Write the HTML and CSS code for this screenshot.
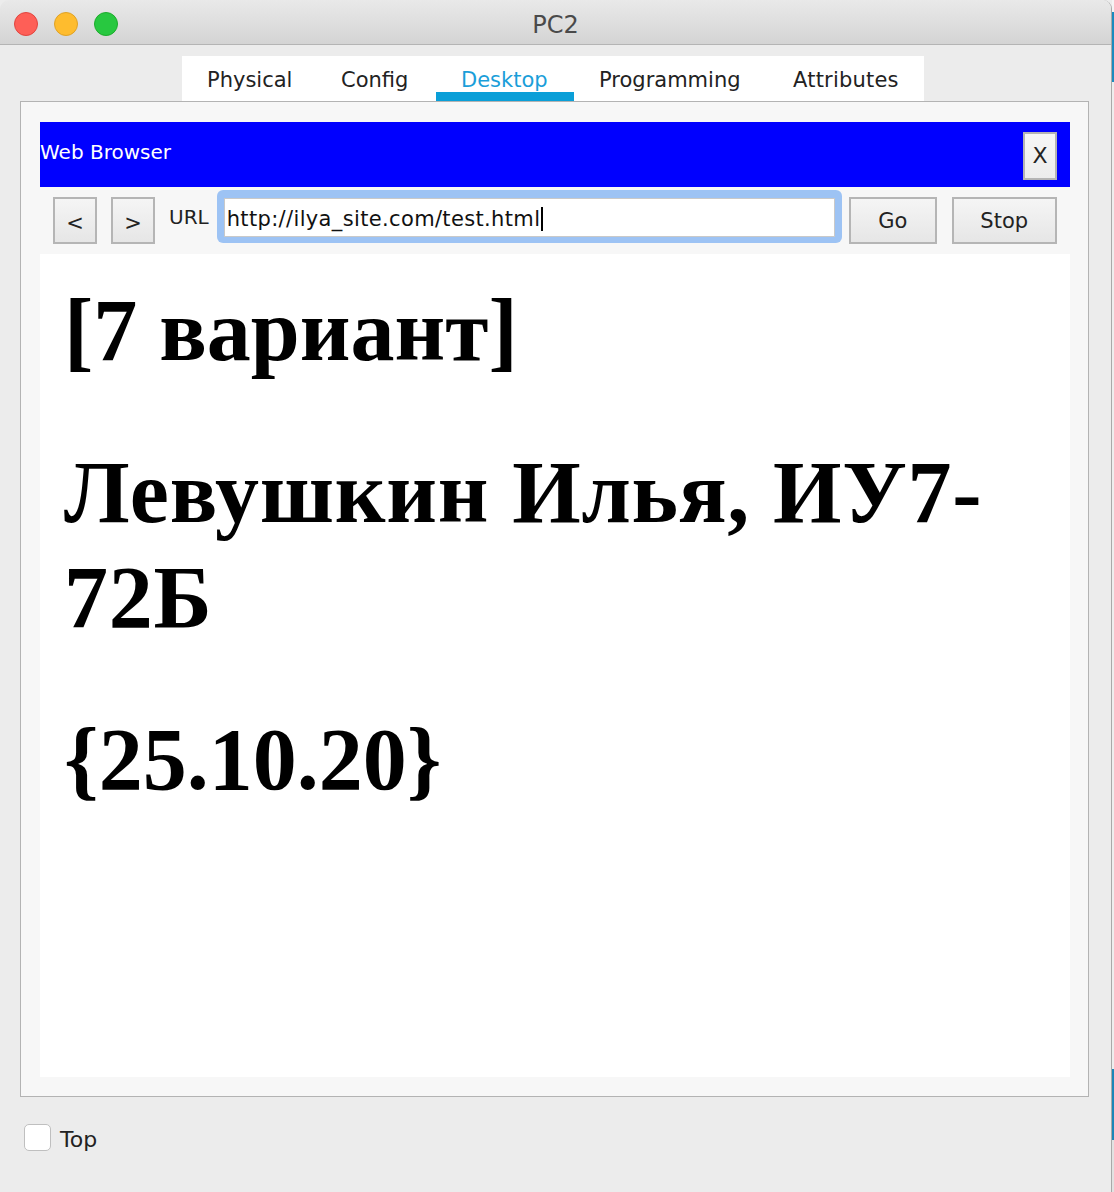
FILE: index.html
```html
<!DOCTYPE html>
<html lang="ru">
<head>
<meta charset="utf-8">
<title>PC2</title>
<link rel="stylesheet" href="styles.css">
</head>
<body>
<div class="screen">
  <div class="window">
    <div class="titlebar">
      <div class="lights">
        <span class="light red"></span>
        <span class="light yellow"></span>
        <span class="light green"></span>
      </div>
      <div class="title">PC2</div>
      <div class="spacer"></div>
    </div>
    <div class="tabs">
      <div class="tab t-physical">Physical</div>
      <div class="tab t-config">Config</div>
      <div class="tab t-desktop active">Desktop</div>
      <div class="tab t-programming">Programming</div>
      <div class="tab t-attributes">Attributes</div>
    </div>
    <div class="panel">
      <div class="app-header">
        <span class="app-title">Web Browser</span>
        <span class="close-btn">X</span>
      </div>
      <div class="navrow">
        <span class="btn nav-btn">&lt;</span>
        <span class="btn nav-btn fwd">&gt;</span>
        <span class="url-label">URL</span>
        <div class="url-ring"><div class="url-input">http://ilya_site.com/test.html<span class="caret"></span></div></div>
        <span class="btn go-btn">Go</span>
        <span class="btn stop-btn">Stop</span>
      </div>
      <div class="page">
        <h1 class="first">[7 вариант]</h1>
        <h1 class="wide">Левушкин Илья, ИУ7-72Б</h1>
        <h1>{25.10.20}</h1>
      </div>
    </div>
    <div class="footer">
      <span class="checkbox"></span>
      <span class="check-label">Top</span>
    </div>
  </div>
  <div class="edge"></div>
</div>
</body>
</html>
```

FILE: styles.css
```css
html, body {
  margin: 0;
  padding: 0;
}
body {
  background: #ececec;
  font-family: "DejaVu Sans", "Noto Sans", sans-serif;
  color: #222;
  width: 1114px;
  height: 1192px;
  overflow: hidden;
}
.screen {
  display: flex;
  height: 1192px;
}
.window {
  width: 1112px;
  height: 1192px;
  box-sizing: border-box;
  border-right: 1px solid #a9a9a9;
  border-top-right-radius: 9px;
  border-top-left-radius: 9px;
  background: #ececec;
  display: flex;
  flex-direction: column;
  overflow: hidden;
}
.edge {
  width: 2px;
  height: 1192px;
  background: linear-gradient(to bottom,
    #f4f4f4 0, #f4f4f4 12px,
    #1b8bbf 12px, #1b8bbf 82px,
    #eeeeee 82px, #eeeeee 1069px,
    #1d86b8 1069px, #1d86b8 1140px,
    #e2e2e2 1140px);
}
.titlebar {
  height: 44px;
  border-bottom: 1px solid #b4b4b4;
  border-top: 1px solid #c8c8c8;
  margin-top: -1px;
  background: linear-gradient(to bottom, #e9e9e9, #d4d4d4);
  display: grid;
  grid-template-columns: 1fr auto 1fr;
  align-items: start;
  flex: none;
}
.lights {
  display: flex;
  gap: 16px;
  padding: 12px 0 0 14px;
}
.light {
  width: 22px;
  height: 22px;
  border-radius: 50%;
  border: 1px solid;
}
.red { background: #fe5f57; border-color: #e1453f; }
.yellow { background: #febc2e; border-color: #dfa226; }
.green { background: #28c840; border-color: #1dac2c; }
.title {
  font-size: 24px;
  line-height: 28px;
  padding-top: 11px;
  color: #4a4a4a;
}
.tabs {
  margin-top: 11px;
  margin-left: 182px;
  width: 742px;
  height: 45px;
  background: #ffffff;
  display: flex;
  flex: none;
}
.tab {
  height: 45px;
  box-sizing: border-box;
  padding: 12px 0 0 25px;
  font-size: 21px;
  line-height: 24px;
  color: #222;
  white-space: nowrap;
}
.t-physical { width: 134px; }
.t-config { width: 120px; }
.t-desktop { width: 138px; }
.t-programming { width: 194px; }
.t-attributes { width: 156px; letter-spacing: 0.2px; }
.tab.active {
  color: #1a9ed9;
  border-bottom: 9px solid #0a9fd8;
}
.panel {
  margin-left: 20px;
  width: 1069px;
  height: 996px;
  box-sizing: border-box;
  border: 1px solid #b3b3b3;
  background: #f7f7f7;
  padding: 20px 18px 19px 19px;
  display: flex;
  flex-direction: column;
  flex: none;
}
.app-header {
  height: 65px;
  background: #0000ff;
  display: flex;
  align-items: center;
  justify-content: space-between;
  flex: none;
}
.app-title {
  color: #ffffff;
  font-size: 20px;
  margin-top: -5px;
}
.close-btn {
  width: 34px;
  height: 48px;
  box-sizing: border-box;
  border: 2px solid #b4b4b4;
  background: linear-gradient(to bottom, #f6f6f6, #ececec);
  margin-right: 13px;
  margin-top: 2px;
  display: flex;
  align-items: center;
  justify-content: center;
  font-size: 22px;
  color: #222;
}
.navrow {
  height: 67px;
  display: flex;
  align-items: flex-start;
  flex: none;
}
.btn {
  height: 47px;
  box-sizing: border-box;
  border: 2px solid #b5b5b5;
  background: linear-gradient(to bottom, #f5f5f5, #e6e6e6);
  display: flex;
  align-items: center;
  justify-content: center;
  font-size: 21px;
  color: #222;
  margin-top: 10px;
}
.nav-btn {
  width: 44px;
  margin-left: 13px;
  padding-top: 4px;
}
.nav-btn.fwd {
  margin-left: 14px;
}
.url-label {
  font-size: 20px;
  margin-left: 14px;
  margin-top: 18px;
}
.url-ring {
  margin-left: 8px;
  margin-top: 3px;
  width: 625px;
  height: 53px;
  box-sizing: border-box;
  border-radius: 6px;
  background: #9dc3f4;
  padding: 8px 7px 6px 7px;
}
.url-input {
  height: 39px;
  box-sizing: border-box;
  background: #ffffff;
  border: 1px solid #c9c9c9;
  font-size: 21px;
  letter-spacing: 0.35px;
  color: #111;
  padding: 2px 0 0 2px;
  line-height: 28px;
  white-space: nowrap;
  display: flex;
  align-items: center;
}
.caret {
  display: inline-block;
  width: 2px;
  height: 24px;
  background: #000;
  margin-left: 1px;
}
.go-btn {
  width: 88px;
  margin-left: 7px;
}
.stop-btn {
  width: 105px;
  margin-left: 15px;
}
.page {
  flex: 1;
  background: #ffffff;
  padding: 24px 22px 0 24px;
  overflow: hidden;
}
.page h1 {
  font-family: "Liberation Serif", "Times New Roman", serif;
  font-weight: bold;
  font-size: 88px;
  line-height: 105px;
  margin: 57px 0 0 0;
  color: #000;
}
.page h1.first {
  margin-top: 0;
}
.page h1.wide {
  letter-spacing: 0.8px;
}
.footer {
  flex: 1;
  display: flex;
  align-items: flex-start;
  padding: 27px 0 0 24px;
}
.checkbox {
  width: 27px;
  height: 27px;
  box-sizing: border-box;
  border: 1px solid #bfbfbf;
  border-radius: 5px;
  background: #ffffff;
}
.check-label {
  font-size: 22px;
  margin-left: 9px;
  margin-top: 2px;
  line-height: 27px;
  color: #222;
}
```
